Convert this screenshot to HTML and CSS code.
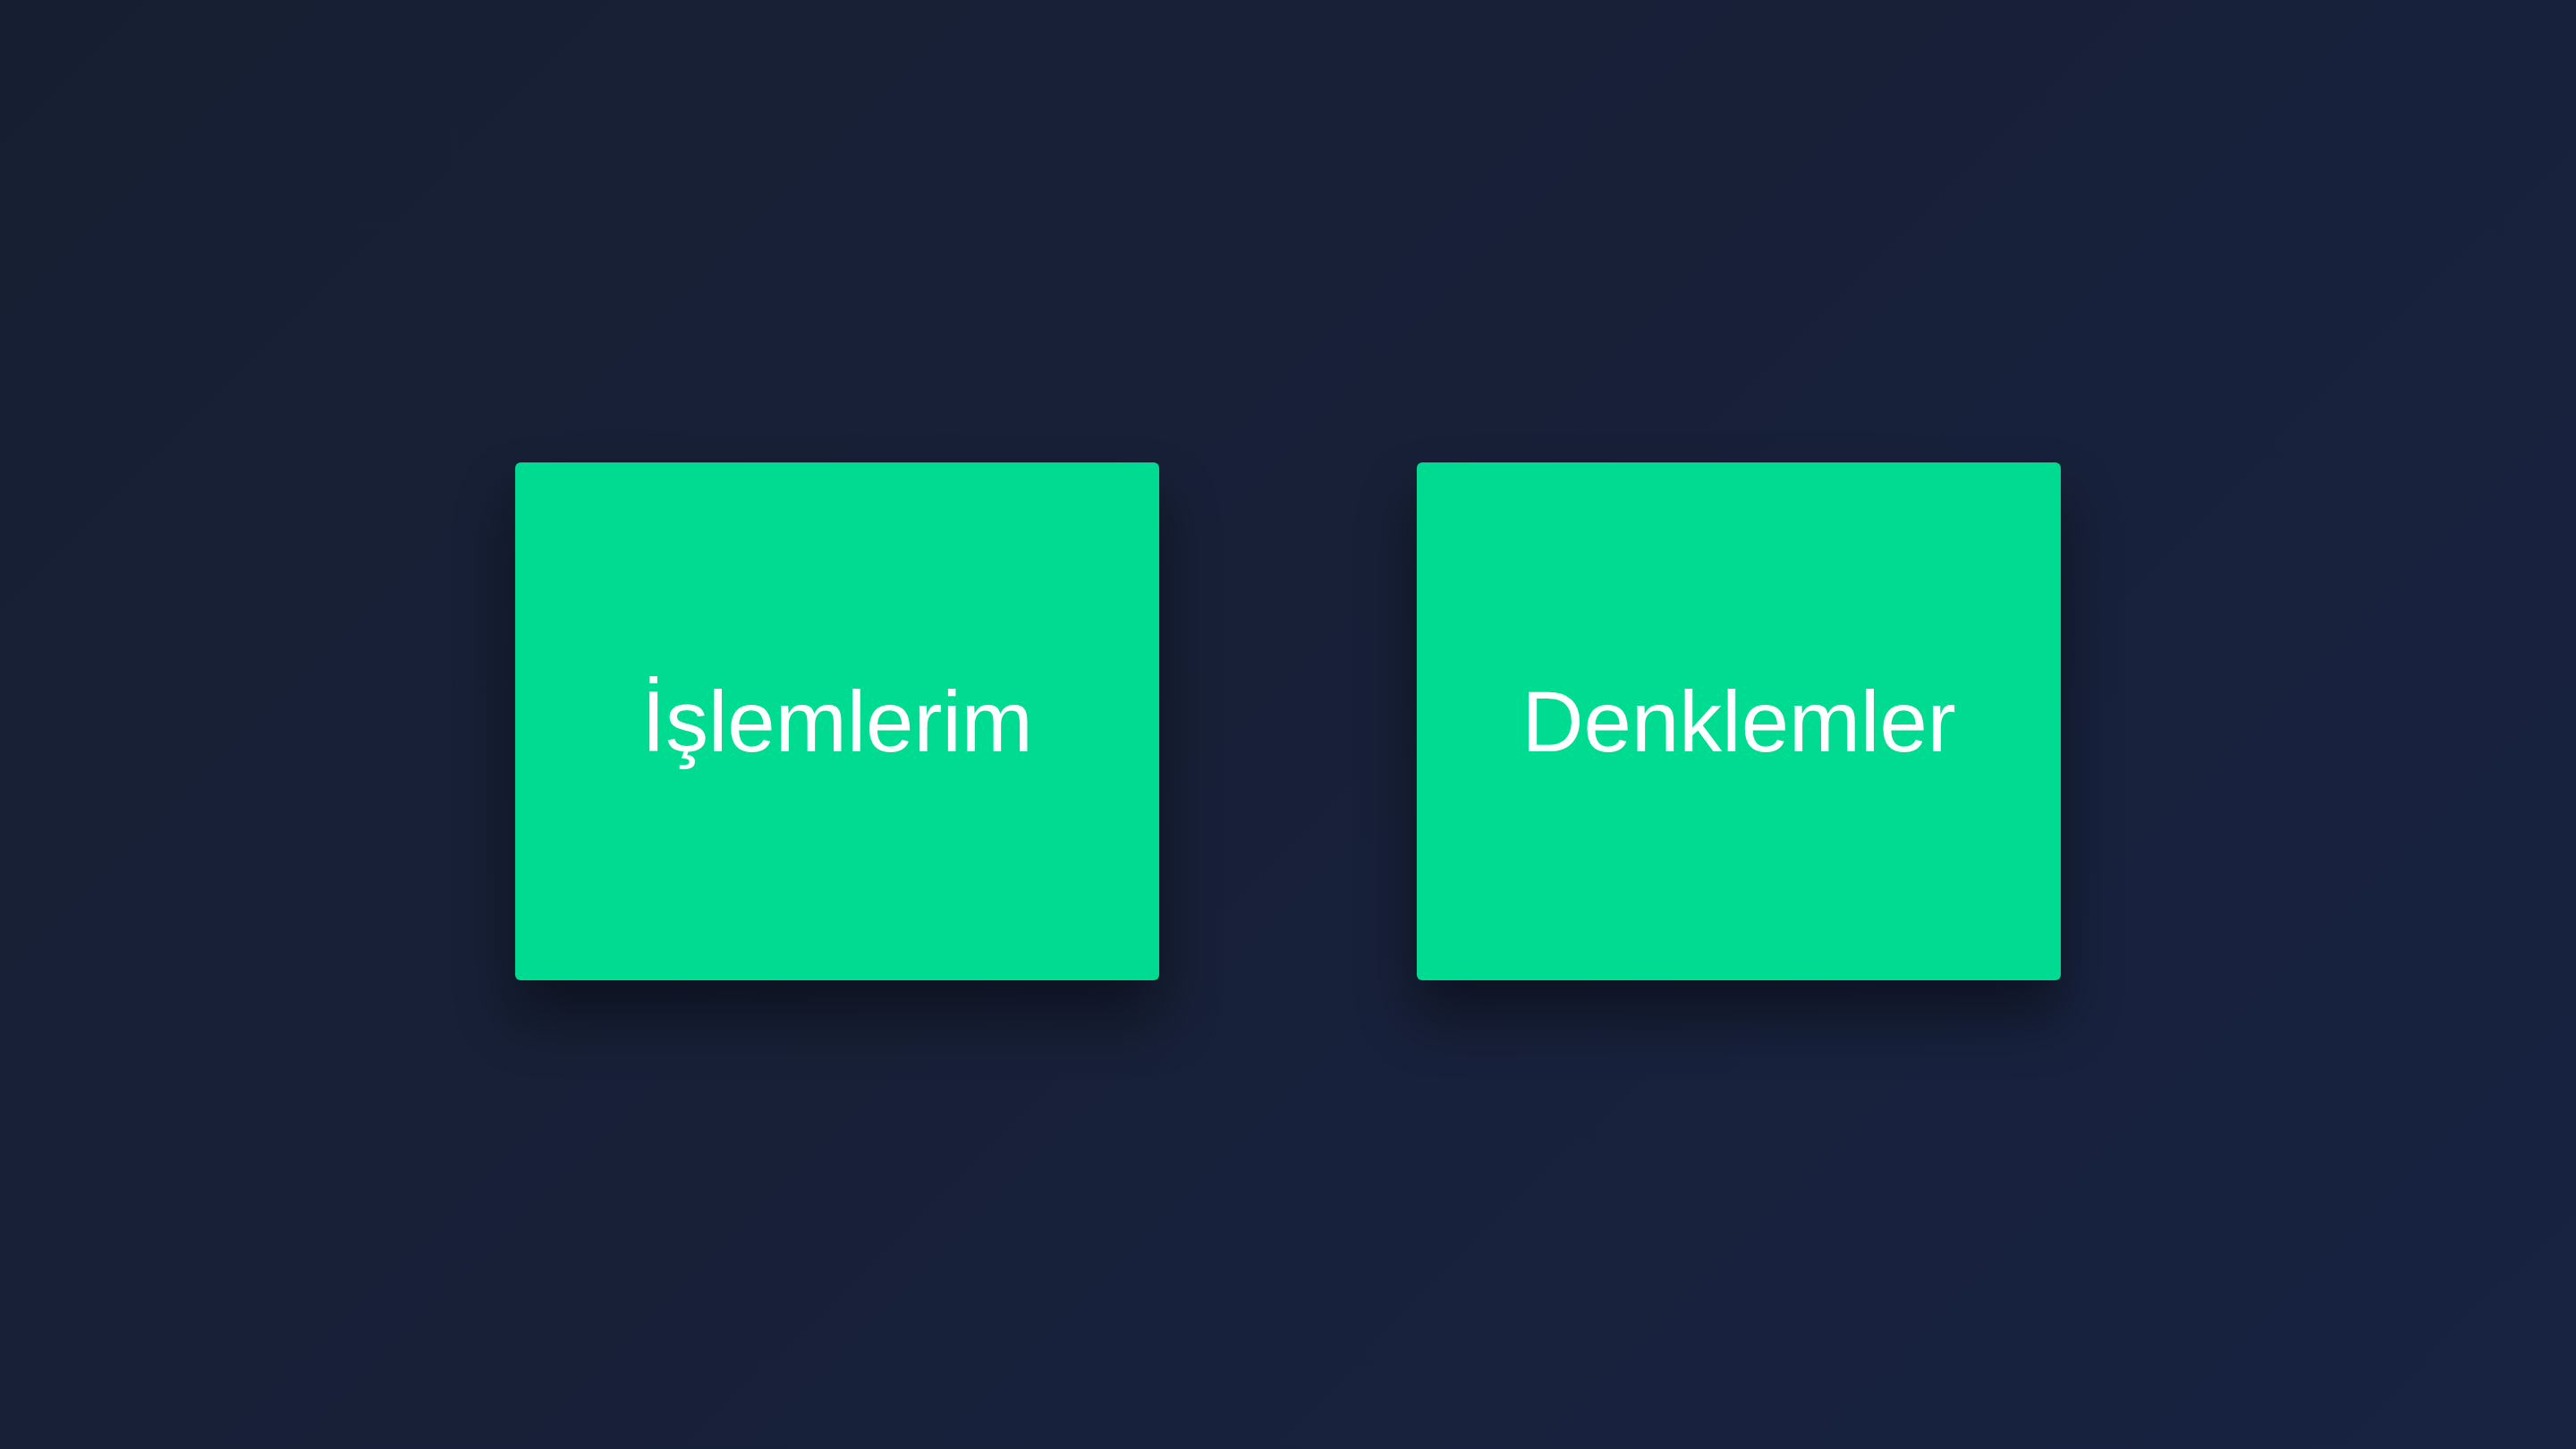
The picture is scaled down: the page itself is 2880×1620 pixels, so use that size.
FILE: index.html
```html
<!DOCTYPE html>
<html lang="tr">
<head>
<meta charset="utf-8">
<title>Menü</title>
<link rel="stylesheet" href="styles.css">
</head>
<body>
<main class="stage">
  <div class="cards">
    <a class="card" href="#">İşlemlerim</a>
    <a class="card" href="#">Denklemler</a>
  </div>
</main>
</body>
</html>
```

FILE: styles.css
```css
html, body {
  margin: 0;
  padding: 0;
  height: 100%;
}
body {
  background: linear-gradient(135deg, #161f32 0%, #172038 50%, #182342 100%);
  font-family: "Liberation Sans", Arial, sans-serif;
}
.stage {
  height: 1620px;
  box-sizing: border-box;
  padding-top: 517px;
}
.cards {
  display: flex;
  justify-content: center;
  gap: 288px;
}
.card {
  width: 720px;
  height: 579px;
  background: #00db92;
  border-radius: 6px;
  display: flex;
  align-items: center;
  justify-content: center;
  color: #ffffff;
  font-size: 96px;
  text-decoration: none;
  box-shadow: 0 40px 64px rgba(0, 0, 0, 0.42);
}
```
